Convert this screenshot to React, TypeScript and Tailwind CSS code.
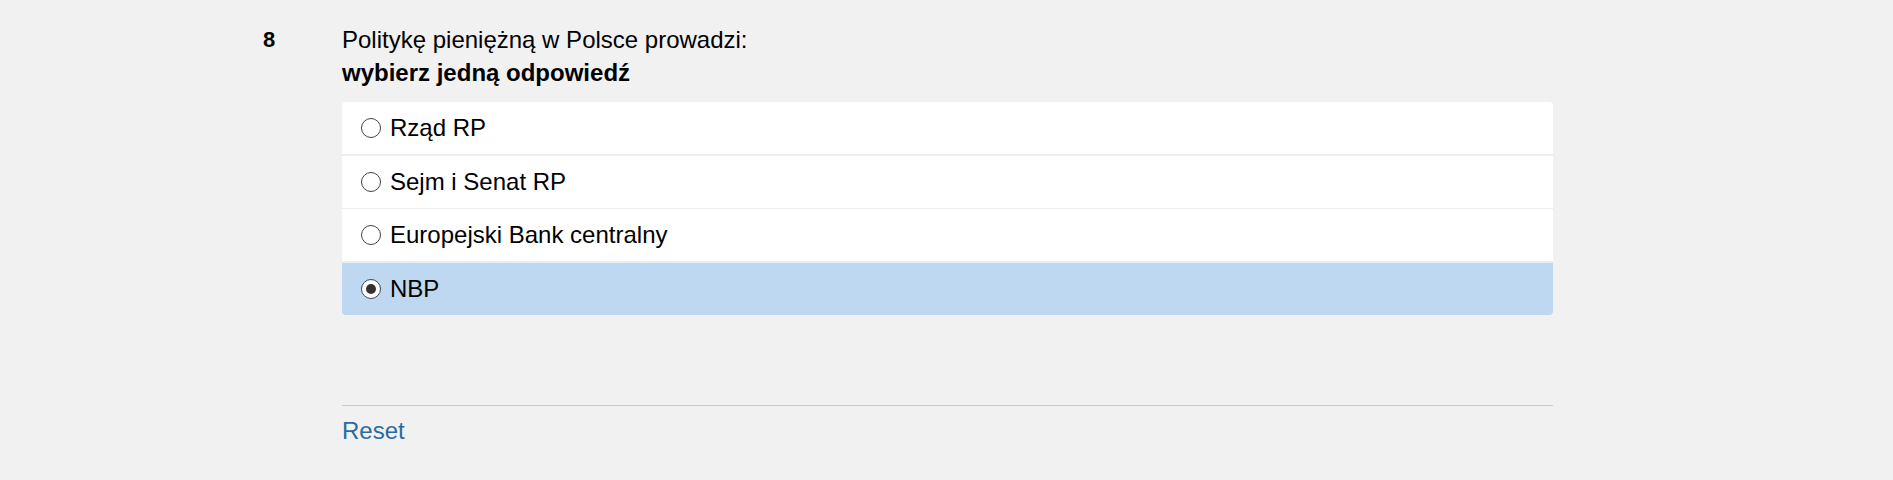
const options = ["Rząd RP", "Sejm i Senat RP", "Europejski Bank centralny", "NBP"];

function Radio({ checked }: { checked: boolean }) {
  return (
    <span className="flex h-[20px] w-[20px] shrink-0 items-center justify-center rounded-full border-[1.5px] border-[#444] bg-white">
      {checked && <span className="h-[10px] w-[10px] rounded-full bg-[#333]" />}
    </span>
  );
}

export default function App() {
  const selected = 3;
  return (
    <div className="min-h-[480px] w-full bg-[#f1f1f1] font-['Liberation_Sans',Arial,sans-serif] text-black">
      <div className="flex pl-[263px] pt-[23px]">
        <div className="w-[79px] shrink-0 text-[22px] font-bold leading-[33px]">8</div>
        <div className="w-[1211px]">
          <div className="text-[24px] leading-[33px]">Politykę pieniężną w Polsce prowadzi:</div>
          <div className="text-[24px] font-bold leading-[33px]">wybierz jedną odpowiedź</div>
          <div className="mt-[13px] flex flex-col gap-[1.5px] overflow-hidden rounded-[4px] bg-[#eeeeee]">
            {options.map((o, i) => (
              <label
                key={o}
                className={
                  "flex h-[52px] items-center gap-[9px] pl-[19px] text-[24px] " +
                  (i === selected ? "bg-[#bdd8f0]" : "bg-white")
                }
              >
                <Radio checked={i === selected} />
                <span>{o}</span>
              </label>
            ))}
          </div>
          <div className="mt-[90px] border-t border-[#cccccc] pt-[11px]">
            <a href="#" className="text-[24px] leading-[28px] text-[#2a6ba3]">
              Reset
            </a>
          </div>
        </div>
      </div>
    </div>
  );
}
